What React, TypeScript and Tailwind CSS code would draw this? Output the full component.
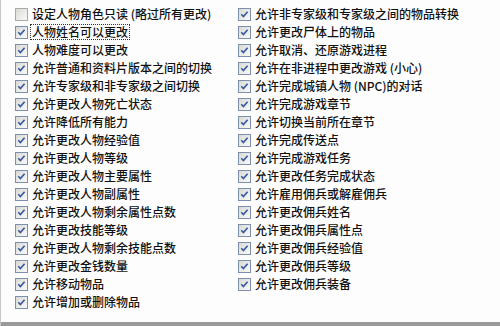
import React from 'react';

const leftItems: { label: string; checked: boolean; focused?: boolean }[] = [
  { label: '设定人物角色只读 (略过所有更改)', checked: false },
  { label: '人物姓名可以更改', checked: true, focused: true },
  { label: '人物难度可以更改', checked: true },
  { label: '允许普通和资料片版本之间的切换', checked: true },
  { label: '允许专家级和非专家级之间切换', checked: true },
  { label: '允许更改人物死亡状态', checked: true },
  { label: '允许降低所有能力', checked: true },
  { label: '允许更改人物经验值', checked: true },
  { label: '允许更改人物等级', checked: true },
  { label: '允许更改人物主要属性', checked: true },
  { label: '允许更改人物副属性', checked: true },
  { label: '允许更改人物剩余属性点数', checked: true },
  { label: '允许更改技能等级', checked: true },
  { label: '允许更改人物剩余技能点数', checked: true },
  { label: '允许更改金钱数量', checked: true },
  { label: '允许移动物品', checked: true },
  { label: '允许增加或删除物品', checked: true },
];

const rightItems = [
  '允许非专家级和专家级之间的物品转换',
  '允许更改尸体上的物品',
  '允许取消、还原游戏进程',
  '允许在非进程中更改游戏 (小心)',
  '允许完成城镇人物 (NPC)的对话',
  '允许完成游戏章节',
  '允许切换当前所在章节',
  '允许完成传送点',
  '允许完成游戏任务',
  '允许更改任务完成状态',
  '允许雇用佣兵或解雇佣兵',
  '允许更改佣兵姓名',
  '允许更改佣兵属性点',
  '允许更改佣兵经验值',
  '允许更改佣兵等级',
  '允许更改佣兵装备',
];

function Box({ checked }: { checked: boolean }) {
  return (
    <svg width="13" height="13" viewBox="0 0 13 13" className="shrink-0">
      <defs>
        <linearGradient id="cbg" x1="0" y1="0" x2="1" y2="1">
          <stop offset="0" stopColor="#d8d8d2" />
          <stop offset="1" stopColor="#fbfbfb" />
        </linearGradient>
      </defs>
      <rect x="0.5" y="0.5" width="12" height="12" fill="url(#cbg)" stroke={checked ? '#7c8fae' : '#a9a9a9'} />
      {checked ? (
        <path d="M3.3 6.3 L5.4 8.5 L9.6 3.8" fill="none" stroke="#3557a0" strokeWidth="1.6" />
      ) : null}
    </svg>
  );
}

function Row({ label, checked, focused }: { label: string; checked: boolean; focused?: boolean }) {
  return (
    <div className="flex h-[18px] items-center gap-[3px]">
      <Box checked={checked} />
      <span
        className={
          'whitespace-nowrap px-px font-medium leading-[14px] ' +
          (focused ? 'outline-1 outline-dotted outline-[#333]' : '')
        }
      >
        {label}
      </span>
    </div>
  );
}

export default function App() {
  return (
    <div
      className="flex h-[326px] w-[500px] flex-col overflow-hidden border-l border-[#c8c8c8] bg-[#fdfdfd] text-[12px] text-[#111]"
      style={{ fontFamily: '"Noto Sans CJK SC", "Liberation Sans", sans-serif' }}
    >
      <div className="grid flex-1 grid-cols-[237px_1fr] pt-[5px]">
        <div className="flex flex-col pl-[14px]">
          {leftItems.map((item) => (
            <Row key={item.label} {...item} />
          ))}
        </div>
        <div className="flex flex-col">
          {rightItems.map((label) => (
            <Row key={label} label={label} checked />
          ))}
        </div>
      </div>
      <div className="h-[4px] bg-[#9a9a9a]" />
    </div>
  );
}
